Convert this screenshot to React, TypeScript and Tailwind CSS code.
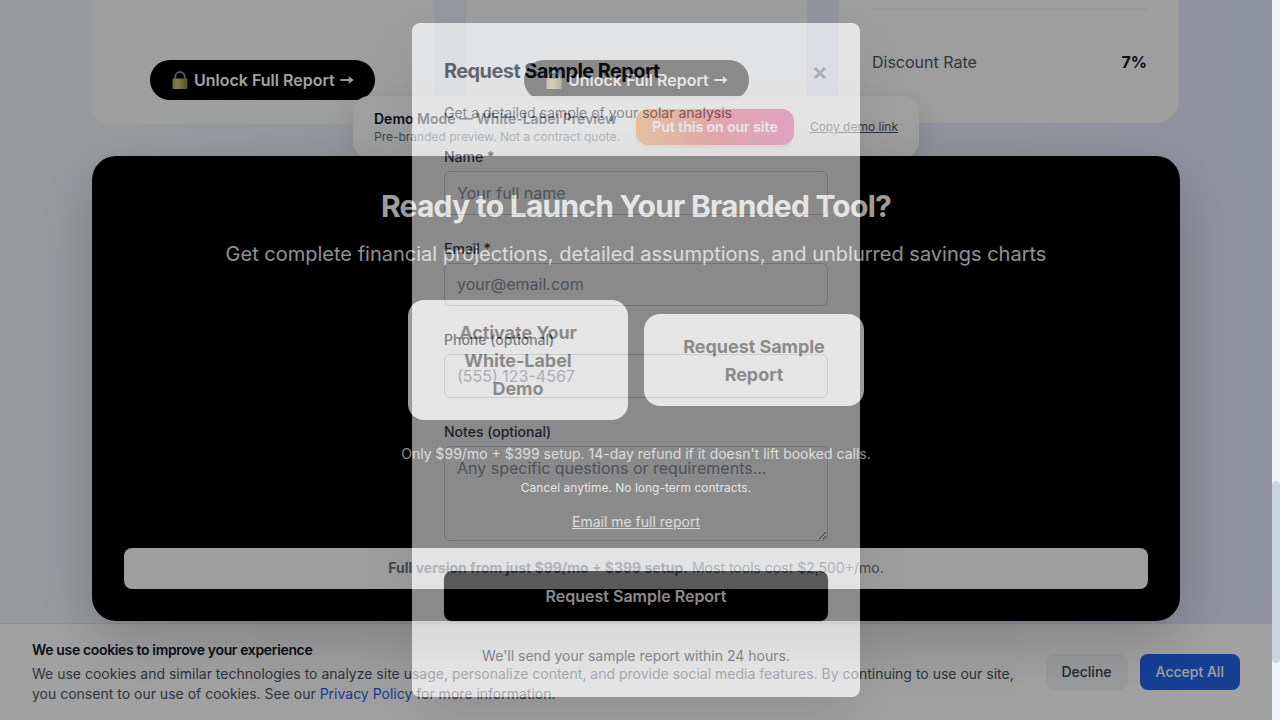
import React from "react";

function Lock() {
  return (
    <svg width="16" height="18" viewBox="0 0 16 18" aria-hidden="true">
      <defs>
        <linearGradient id="brass" x1="0" y1="0" x2="1" y2="0">
          <stop offset="0" stopColor="#b5a564" />
          <stop offset="0.35" stopColor="#d0c67e" />
          <stop offset="0.65" stopColor="#ada05c" />
          <stop offset="1" stopColor="#8c814a" />
        </linearGradient>
      </defs>
      <path d="M3.2 9V5.8a4.8 4.8 0 0 1 9.6 0V9" fill="none" stroke="#7f8b96" strokeWidth="2" />
      <rect x="0.5" y="7.5" width="15" height="10.5" rx="0.8" fill="url(#brass)" />
    </svg>
  );
}

function Arrow() {
  return (
    <svg width="14" height="10" viewBox="0 0 14 10" aria-hidden="true">
      <path d="M0.3 5H10" stroke="currentColor" strokeWidth="1.9" />
      <path d="M8.6 0.9L13.7 5L8.6 9.1L9.4 5Z" fill="currentColor" />
    </svg>
  );
}

function UnlockButton() {
  return (
    <button className="flex h-10 w-[225px] items-center rounded-full bg-black pl-[22px] text-base font-semibold text-white whitespace-nowrap">
      <span className="mb-[1px]"><Lock /></span>
      <span className="ml-[6px]">Unlock Full Report</span>
      <span className="ml-[5px]"><Arrow /></span>
    </button>
  );
}

function Cards() {
  return (
    <div className="flex h-[124px] justify-between pl-[92px] pr-[93px]">
      <div className="flex w-[342px] justify-center rounded-b-2xl bg-[#fafbfc] pr-[1px] pt-[60px]">
        <UnlockButton />
      </div>
      <div className="flex w-[341px] justify-center rounded-b-2xl bg-[#fafbfc] pt-[60px]">
        <UnlockButton />
      </div>
      <div className="h-[123px] w-[340px] rounded-b-3xl bg-[#fbfbfc] px-8 pt-2">
        <div className="h-[2px] bg-[#f0f1f3]" />
        <div className="mt-10 flex justify-between pl-[1px] text-base leading-6 text-[#4b5563]">
          <span>Discount Rate</span>
          <span className="font-bold text-[#111827]">7%</span>
        </div>
      </div>
    </div>
  );
}

function DemoBanner() {
  return (
    <div className="absolute left-[353px] top-24 flex h-[62px] w-[566px] items-center rounded-2xl bg-[#fefefe]/95 px-[21px] shadow-[0_10px_30px_rgba(0,0,0,0.12)]">
      <div className="w-[262px] whitespace-nowrap">
        <div className="text-sm font-semibold leading-5 text-[#111827]">Demo Mode — White-Label Preview</div>
        <div className="text-xs leading-4 text-[#64748b]">Pre-branded preview. Not a contract quote.</div>
      </div>
      <button className="h-9 w-[158px] rounded-xl bg-linear-to-r from-[#ff9a3d] via-[#f5505a] to-[#ec4899] text-sm font-bold tracking-[-0.005em] text-white shadow-md">
        Put this on our site
      </button>
      <span className="ml-4 whitespace-nowrap text-xs text-[#475569] underline">Copy demo link</span>
    </div>
  );
}

function CookieBar() {
  return (
    <div className="absolute bottom-0 left-0 flex h-[97px] w-[1272px] border-t border-[#e5e7eb] bg-white px-8">
      <div className="w-[1000px] pt-4">
        <div className="text-sm font-semibold leading-5 tracking-tight text-[#111827]">We use cookies to improve your experience</div>
        <p className="mt-1 text-sm leading-5 text-[#4b5563]">
          We use cookies and similar technologies to analyze site usage, personalize content, and provide social media features. By continuing to use our site, you consent to our use of cookies. See our <a className="text-[#2563eb]">Privacy Policy</a> for more information.
        </p>
      </div>
      <div className="ml-[13.5px] flex gap-3 pt-[30px]">
        <button className="h-9 w-[82px] rounded-lg bg-[#f3f4f6] text-sm font-medium text-[#374151]">Decline</button>
        <button className="h-9 w-[100.5px] rounded-lg bg-[#2563eb] text-sm font-medium text-white">Accept All</button>
      </div>
    </div>
  );
}

function CallToAction() {
  return (
    <section className="relative mx-[92px] mt-8 flex h-[464.5px] w-[1088px] flex-col items-center rounded-3xl bg-black px-8 pt-8 text-center text-white shadow-[0_20px_60px_rgba(0,0,0,0.2)]">
      <h2 className="text-[30px] font-bold leading-9 tracking-tight">Ready to Launch Your Branded Tool?</h2>
      <p className="mt-4 text-xl leading-7 text-white/90">
        Get complete financial projections, detailed assumptions, and unblurred savings charts
      </p>
      <div className="mt-8 flex items-center gap-4">
        <button className="w-[220px] rounded-2xl bg-white px-8 pb-[17px] pt-[19px] text-lg font-bold leading-7 tracking-[-0.003em] text-black">
          Activate Your White-Label Demo
        </button>
        <button className="w-[220px] rounded-2xl bg-white px-8 pb-[17px] pt-[19px] text-lg font-bold leading-7 tracking-[-0.003em] text-black">
          Request Sample Report
        </button>
      </div>
      <p className="mt-6 text-sm leading-5 text-white/90">
        Only $99/mo + $399 setup. 14-day refund if it doesn't lift booked calls.
      </p>
      <p className="mt-4 text-xs leading-4">Cancel anytime. No long-term contracts.</p>
      <a className="mt-4 text-sm leading-5 text-white/90 underline">Email me full report</a>
      <div className="mt-4 h-[40.5px] w-full rounded-lg bg-[#fafbfc] py-[10px] text-sm leading-5 text-[#6b7280]">
        <b className="font-bold">Full version from just $99/mo + $399 setup.</b> Most tools cost $2,500+/mo.
      </div>
    </section>
  );
}

function Field({ label, placeholder }: { label: string; placeholder: string }) {
  return (
    <label className="mb-6 block">
      <span className="mb-1 block text-sm font-medium leading-5 text-[#374151]">{label}</span>
      <input
        placeholder={placeholder}
        className="block h-[43.5px] w-full rounded-md border border-[#d1d5db] bg-white px-3 text-base placeholder:text-[#9299a8]"
      />
    </label>
  );
}

function Modal() {
  return (
    <div className="absolute left-0 top-0 flex h-[720px] w-[1272px] items-center justify-center bg-black/50 opacity-[0.74]">
      <div className="h-[674px] w-[448px] rounded-lg bg-white px-8 pt-8 opacity-[0.73] shadow-2xl">
        <div className="flex h-8 items-center justify-between">
          <h3 className="text-xl font-bold tracking-[-0.03em] text-[#111827]">Request Sample Report</h3>
          <span className="pt-[2px] text-2xl font-semibold leading-8 text-[#9ca3af]">×</span>
        </div>
        <p className="mt-4 text-sm leading-5 text-[#4b5563]">Get a detailed sample of your solar analysis</p>
        <div className="mt-6">
          <Field label="Name *" placeholder="Your full name" />
          <Field label="Email *" placeholder="your@email.com" />
          <Field label="Phone (optional)" placeholder="(555) 123-4567" />
          <label className="block">
            <span className="mb-1 block text-sm font-medium leading-5 text-[#374151]">Notes (optional)</span>
            <textarea
              placeholder="Any specific questions or requirements..."
              className="block h-[95px] w-full resize rounded-md border border-[#d1d5db] bg-white px-3 py-[9px] text-base leading-6 placeholder:text-[#9299a8]"
            />
          </label>
          <button className="mt-[30px] h-[50px] w-full rounded-lg bg-black text-base font-semibold text-white shadow-sm">
            Request Sample Report
          </button>
        </div>
        <p className="mt-[25px] text-center text-sm leading-5 text-[#4b5563]">We'll send your sample report within 24 hours.</p>
      </div>
    </div>
  );
}

export default function App() {
  return (
    <div className="flex h-[720px] w-[1280px] overflow-hidden font-[Inter,sans-serif] antialiased">
      <main className="relative h-[720px] w-[1272px] overflow-hidden bg-linear-to-r from-[#f1f6fa] to-[#e3e7fc]">
        <Cards />
        <DemoBanner />
        <CookieBar />
        <CallToAction />
        <Modal />
      </main>
      <div className="h-[720px] w-2 bg-[#f1f5f9] pt-[481px]">
        <div className="h-[182px] rounded-full bg-[#cbd5e1]" />
      </div>
    </div>
  );
}
